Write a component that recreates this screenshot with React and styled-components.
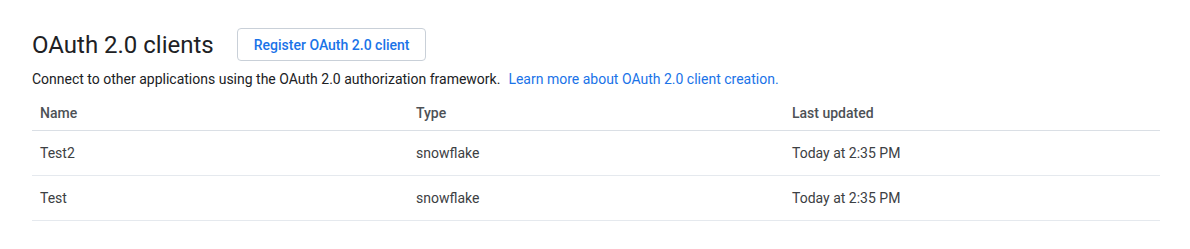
import React from 'react';
import styled, { createGlobalStyle } from 'styled-components';

const GlobalStyle = createGlobalStyle`
  body {
    margin: 0;
    background: #fff;
    font-family: Roboto, "Liberation Sans", sans-serif;
  }
`;

const clients = [
  { id: 1, name: 'Test2', type: 'snowflake', updated: 'Today at 2:35 PM' },
  { id: 2, name: 'Test', type: 'snowflake', updated: 'Today at 2:35 PM' },
];

const App = () => (
  <>
    <GlobalStyle />
    <Page>
      <Header>
        <Title>OAuth 2.0 clients</Title>
        <RegisterButton type="button">Register OAuth 2.0 client</RegisterButton>
      </Header>
      <Description>
        Connect to other applications using the OAuth 2.0 authorization framework.
        <Link href="#">Learn more about OAuth 2.0 client creation.</Link>
      </Description>
      <Table>
        <thead>
          <tr>
            <HeadCell>Name</HeadCell>
            <HeadCell>Type</HeadCell>
            <HeadCell>Last updated</HeadCell>
          </tr>
        </thead>
        <tbody>
          {clients.map(client => (
            <tr key={client.id}>
              <Cell>{client.name}</Cell>
              <Cell>{client.type}</Cell>
              <Cell>{client.updated}</Cell>
            </tr>
          ))}
        </tbody>
      </Table>
    </Page>
  </>
);

export default App;

// Styling
const Page = styled.div`
  padding: 28px 30px 0 32px;
`;

const Header = styled.div`
  display: flex;
  align-items: center;
  gap: 23px;
`;

const Title = styled.h1`
  margin: 0;
  font-size: 24px;
  font-weight: 400;
  color: #202124;
`;

const RegisterButton = styled.button`
  height: 33px;
  padding: 0 16px;
  background: #fff;
  border: 1px solid #c9d0d8;
  border-radius: 4px;
  color: #1a73e8;
  font-family: inherit;
  font-size: 14px;
  font-weight: 500;
`;

const Description = styled.p`
  margin: 8px 0 0;
  font-size: 14px;
  line-height: 20px;
  color: #202124;
`;

const Link = styled.a`
  margin-left: 8px;
  color: #1a73e8;
  text-decoration: none;
`;

const Table = styled.table`
  width: 100%;
  margin-top: 7px;
  border-collapse: collapse;
  table-layout: fixed;
`;

const HeadCell = styled.th`
  height: 34px;
  padding: 0 8px;
  text-align: left;
  font-size: 14px;
  font-weight: 500;
  color: #4d5156;
  border-bottom: 1px solid #dadfe5;
`;

const Cell = styled.td`
  height: 44px;
  padding: 0 8px;
  font-size: 14px;
  color: #3c4043;
  border-bottom: 1px solid #e5e9ee;
`;
